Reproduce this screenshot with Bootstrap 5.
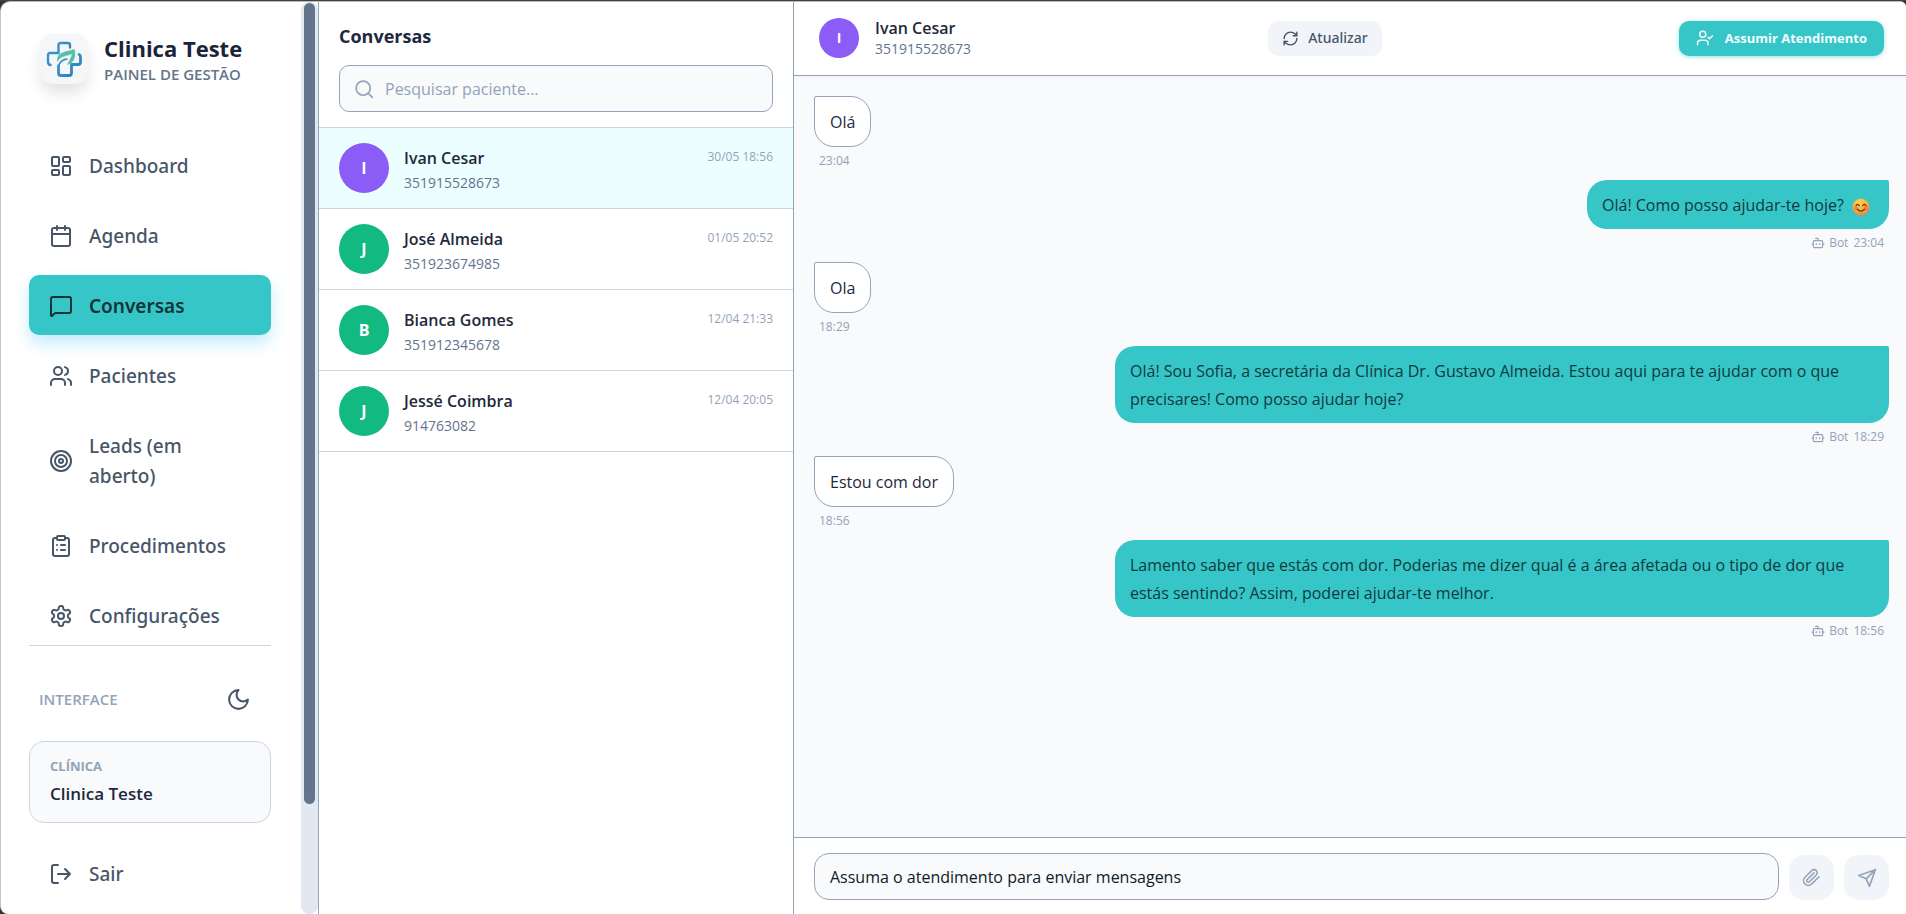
<!DOCTYPE html>
<html lang="pt">
<head>
<meta charset="utf-8">
<meta name="viewport" content="width=device-width, initial-scale=1">
<title>Clinica Teste - Conversas</title>
<link href="https://cdn.jsdelivr.net/npm/bootstrap@5.3.0/dist/css/bootstrap.min.css" rel="stylesheet">
<style>
  :root { --teal: #36c6c7; --ink: #1e293b; --slate: #475569; --soft: #64748b; --mute: #94a3b8; --hair: #cbd5e1; --mist: #f8fafc; }
  body { font-family: "Open Sans", "Noto Sans", sans-serif; font-size: 16px; line-height: 24px; color: var(--ink); background: #333; }
  svg { fill: none; stroke: currentColor; stroke-width: 2; stroke-linecap: round; stroke-linejoin: round; flex: none; }
  a { color: inherit; text-decoration: none; }
  .shell { height: 100vh; border-top: 1px solid #444046; }
  .window { background: #fff; border-left: 1px solid #c3c3c6; border-top: 1px solid #b9b9bc; border-radius: 10px 6px 0 8px; overflow: hidden; }

  .side { width: 300px; padding: 31px 30px 0 28px; flex: none; }
  .brand { padding-left: 10px; gap: 15px; margin-bottom: 50px; }
  .brand-logo { width: 50px; height: 50px; border-radius: 14px; background: #f5f6f7; box-shadow: 0 10px 16px -2px rgba(0,0,0,.12); flex: none; }
  .brand h1 { font-size: 22px; line-height: 30px; font-weight: 700; margin: 0; color: #1b2438; }
  .brand-sub { font-size: 15px; line-height: 22px; font-weight: 600; color: var(--soft); }
  .menu { gap: 10px; border-bottom: 1px solid var(--hair); }
  .menu-item { min-height: 60px; padding: 16px 20px 14px; gap: 16px; font-family: "Noto Sans", sans-serif; font-size: 19px; line-height: 30px; font-weight: 500; color: var(--slate); border-radius: 10px; }
  .menu-item.current { background: var(--teal); color: #123338; font-weight: 600; box-shadow: 0 8px 16px rgba(56,189,248,.3); }
  .iface { padding: 0 20px 0 10px; margin: 38px 0 27px; height: 30px; font-size: 15px; font-weight: 600; color: var(--mute); }
  .iface button { color: var(--slate); line-height: 0; }
  .clinic { border: 1px solid var(--hair); border-radius: 15px; background: var(--mist); padding: 14px 20px 11px; margin-bottom: 20px; }
  .clinic-label { font-size: 13px; line-height: 20px; font-weight: 700; color: var(--mute); }
  .clinic-name { font-size: 17px; line-height: 35px; font-weight: 600; }

  .track { width: 17px; padding: 1px 3px; background: #e2e8f0; border-radius: 8px; flex: none; }
  .track-thumb { height: 88%; background: #64748b; border-radius: 6px; }

  .people { width: 476px; flex: none; border: solid var(--mute); border-width: 0 1px; }
  .people-head { padding: 19px 20px 15px; border-bottom: 1px solid var(--hair); }
  .people-head h2 { font-size: 18px; line-height: 30px; font-weight: 700; margin: 0 0 14px; }
  .search-box { border: 1px solid var(--mute); border-radius: 10px; background: var(--mist); height: 47px; padding: 0 14px; gap: 11px; color: var(--mute); }
  .search-box input { border: 0; background: none; outline: 0; min-width: 0; }
  .search-box input::placeholder { color: var(--mute); opacity: 1; }
  .person { padding: 15px 20px 13px; gap: 15px; border-bottom: 1px solid var(--hair); }
  .person.current { background: #ecfeff; }
  .avatar { width: 50px; height: 50px; border-radius: 50%; background: #12b981; color: #fff; font-weight: 700; flex: none; }
  .avatar.violet { background: #8b5cf6; }
  .avatar.sm40 { width: 40px; height: 40px; font-size: 14px; }
  .who { font-weight: 600; line-height: 26px; padding-top: 2px; }
  .phone { font-size: 14px; line-height: 24px; color: var(--soft); }
  .stamp { font-size: 12px; line-height: 28px; color: var(--mute); }

  .chat-head { height: 74px; padding: 0 22px 1px 25px; border-bottom: 1px solid var(--mute); background: #fff; box-shadow: 0 1px 3px rgba(0,0,0,.05); }
  .chat-head .who { line-height: 20px; }
  .chat-head .phone { line-height: 22px; }
  .act { height: 35px; border: 0; border-radius: 10px; padding: 0 14px; font-size: 14px; line-height: 20px; background: #f1f5f9; color: var(--slate); font-family: "Noto Sans", sans-serif; font-weight: 500; gap: 9px; }
  .act.take { background: var(--teal); color: #f0fdff; font-family: inherit; font-size: 13px; font-weight: 700; gap: 11px; padding: 0 17px; box-shadow: 0 1px 4px rgba(54,198,199,.5); }
  .log { background: var(--mist); padding: 20px 17px 20px 20px; overflow: hidden; }
  .msg { max-width: 72%; padding: 11px 15px 10px; line-height: 28px; border-radius: 20px; }
  .msg.theirs { background: #fff; border: 1px solid var(--mute); border-top-left-radius: 2px; }
  .msg.ours { background: var(--teal); color: #12393f; border-top-right-radius: 2px; }
  .meta { font-size: 12px; line-height: 18px; color: var(--mute); padding: 0 5px; margin: 5px 0 10px; gap: 5px; }
  .compose { padding: 15px 17px 14px 20px; gap: 10px; border-top: 1px solid var(--mute); background: #fff; }
  .compose input { height: 47px; border: 1px solid var(--mute); border-radius: 15px; background: var(--mist); padding: 0 15px; color: #111827; min-width: 0; }
  .sq { width: 45px; height: 45px; border: 0; border-radius: 15px; background: #f1f5f9; color: var(--mute); padding: 0; }
</style>
</head>
<body>
<div class="shell">
<div class="window d-flex h-100">

  <aside class="side">
    <div class="brand d-flex align-items-center">
      <div class="brand-logo d-flex align-items-center justify-content-center">
        <svg width="36" height="36" viewBox="0 0 36 36" aria-hidden="true">
          <defs><linearGradient id="blue" x1="0" y1="0" x2="1" y2="1"><stop offset="0" stop-color="#3d9ad3"/><stop offset="1" stop-color="#2b7db8"/></linearGradient></defs>
          <path d="M11.500 12H4Q2 12 2 14V21Q2 23.500 4.500 24M12.500 12V4Q12.500 2 14.500 2H21.500Q24 2 24 4V6.500" stroke="url(#blue)" stroke-width="2.400"/>
          <path d="M33 13.500Q34.500 14 34.500 16V21Q34.500 23.500 32 23.500H25.500V32Q25.500 34.500 23 34.500H15Q12.500 34.500 12.500 32V25" stroke="url(#blue)" stroke-width="2.800"/>
          <path d="M11.500 20C10.500 11.500 18 11.500 28.500 8.500C30 17 27 22 21.500 23.500C23.500 20 25 17 26.500 12.500C20 15 15 14.500 11.500 20Z" fill="#52c0a8" stroke="#52c0a8" stroke-width=".6"/>
          <path d="M12.500 25C14 20.500 17 18.500 21 18" stroke="#3487c2" stroke-width="1.500"/>
        </svg>
      </div>
      <div>
        <h1>Clinica Teste</h1>
        <div class="brand-sub">PAINEL DE GESTÃO</div>
      </div>
    </div>

    <nav class="menu d-flex flex-column">
      <a href="#" class="menu-item d-flex align-items-center"><svg width="24" height="24" viewBox="0 0 24 24"><rect x="3" y="3" width="7" height="9" rx="1"/><rect x="14" y="3" width="7" height="5" rx="1"/><rect x="14" y="12" width="7" height="9" rx="1"/><rect x="3" y="16" width="7" height="5" rx="1"/></svg><span>Dashboard</span></a>
      <a href="#" class="menu-item d-flex align-items-center"><svg width="24" height="24" viewBox="0 0 24 24"><path d="M8 2v4M16 2v4M3 10h18"/><rect x="3" y="4" width="18" height="18" rx="2"/></svg><span>Agenda</span></a>
      <a href="#" class="menu-item current d-flex align-items-center" aria-current="page"><svg width="24" height="24" viewBox="0 0 24 24"><path d="M22 17a2 2 0 0 1-2 2H6.800a2 2 0 0 0-1.400.6L3.200 21.800A.7.7 0 0 1 2 21.300V5a2 2 0 0 1 2-2h16a2 2 0 0 1 2 2z"/></svg><span>Conversas</span></a>
      <a href="#" class="menu-item d-flex align-items-center"><svg width="24" height="24" viewBox="0 0 24 24"><path d="M16 21v-2a4 4 0 0 0-4-4H6a4 4 0 0 0-4 4v2M22 21v-2a4 4 0 0 0-3-3.870M16 3.130a4 4 0 0 1 0 7.750"/><circle cx="9" cy="7" r="4"/></svg><span>Pacientes</span></a>
      <a href="#" class="menu-item d-flex align-items-center"><svg width="24" height="24" viewBox="0 0 24 24"><circle cx="12" cy="12" r="10"/><circle cx="12" cy="12" r="6"/><circle cx="12" cy="12" r="2"/></svg><span>Leads (em aberto)</span></a>
      <a href="#" class="menu-item d-flex align-items-center"><svg width="24" height="24" viewBox="0 0 24 24"><rect x="8" y="2" width="8" height="4" rx="1"/><path d="M16 4h2a2 2 0 0 1 2 2v14a2 2 0 0 1-2 2H6a2 2 0 0 1-2-2V6a2 2 0 0 1 2-2h2M12 11h4M12 16h4M8 11h.01M8 16h.01"/></svg><span>Procedimentos</span></a>
      <a href="#" class="menu-item d-flex align-items-center"><svg width="24" height="24" viewBox="0 0 24 24"><path d="M12.220 2h-.44a2 2 0 0 0-2 2v.18a2 2 0 0 1-1 1.730l-.43.25a2 2 0 0 1-2 0l-.15-.08a2 2 0 0 0-2.730.73l-.22.38a2 2 0 0 0 .73 2.730l.15.1a2 2 0 0 1 1 1.720v.51a2 2 0 0 1-1 1.740l-.15.09a2 2 0 0 0-.73 2.730l.22.38a2 2 0 0 0 2.730.73l.15-.08a2 2 0 0 1 2 0l.43.25a2 2 0 0 1 1 1.730V20a2 2 0 0 0 2 2h.44a2 2 0 0 0 2-2v-.18a2 2 0 0 1 1-1.730l.43-.25a2 2 0 0 1 2 0l.15.08a2 2 0 0 0 2.730-.73l.22-.39a2 2 0 0 0-.73-2.730l-.15-.08a2 2 0 0 1-1-1.740v-.5a2 2 0 0 1 1-1.740l.15-.09a2 2 0 0 0 .73-2.730l-.22-.38a2 2 0 0 0-2.730-.73l-.15.08a2 2 0 0 1-2 0l-.43-.25a2 2 0 0 1-1-1.730V4a2 2 0 0 0-2-2z"/><circle cx="12" cy="12" r="3"/></svg><span>Configurações</span></a>
    </nav>

    <div class="iface d-flex align-items-center justify-content-between">
      <span>INTERFACE</span>
      <button type="button" class="btn p-0 border-0" aria-label="Tema escuro"><svg width="25" height="25" viewBox="0 0 24 24"><path d="M12 3a6 6 0 0 0 9 9 9 9 0 1 1-9-9Z"/></svg></button>
    </div>
    <div class="clinic">
      <div class="clinic-label">CLÍNICA</div>
      <div class="clinic-name">Clinica Teste</div>
    </div>
    <a href="#" class="menu-item d-flex align-items-center"><svg width="24" height="24" viewBox="0 0 24 24"><path d="M9 21H5a2 2 0 0 1-2-2V5a2 2 0 0 1 2-2h4M16 17l5-5-5-5M21 12H9"/></svg><span>Sair</span></a>
  </aside>
  <div class="track" aria-hidden="true"><div class="track-thumb"></div></div>

  <section class="people">
    <div class="people-head">
      <h2>Conversas</h2>
      <label class="search-box d-flex align-items-center">
        <svg width="20" height="20" viewBox="0 0 24 24"><circle cx="11" cy="11" r="8.500"/><path d="m22 22-4.800-4.800"/></svg>
        <input type="text" class="flex-grow-1 p-0" placeholder="Pesquisar paciente..." aria-label="Pesquisar paciente">
      </label>
    </div>
    <a href="#" class="person current d-flex">
      <span class="avatar violet d-flex align-items-center justify-content-center">I</span>
      <span class="flex-grow-1"><span class="d-flex justify-content-between"><span class="who">Ivan Cesar</span><span class="stamp">30/05 18:56</span></span><span class="phone d-block">351915528673</span></span>
    </a>
    <a href="#" class="person d-flex">
      <span class="avatar d-flex align-items-center justify-content-center">J</span>
      <span class="flex-grow-1"><span class="d-flex justify-content-between"><span class="who">José Almeida</span><span class="stamp">01/05 20:52</span></span><span class="phone d-block">351923674985</span></span>
    </a>
    <a href="#" class="person d-flex">
      <span class="avatar d-flex align-items-center justify-content-center">B</span>
      <span class="flex-grow-1"><span class="d-flex justify-content-between"><span class="who">Bianca Gomes</span><span class="stamp">12/04 21:33</span></span><span class="phone d-block">351912345678</span></span>
    </a>
    <a href="#" class="person d-flex">
      <span class="avatar d-flex align-items-center justify-content-center">J</span>
      <span class="flex-grow-1"><span class="d-flex justify-content-between"><span class="who">Jessé Coimbra</span><span class="stamp">12/04 20:05</span></span><span class="phone d-block">914763082</span></span>
    </a>
  </section>

  <main class="d-flex flex-column flex-grow-1">
    <header class="chat-head d-flex align-items-center justify-content-between position-relative">
      <div class="d-flex align-items-center gap-3">
        <span class="avatar violet sm40 d-flex align-items-center justify-content-center">I</span>
        <div><div class="who">Ivan Cesar</div><div class="phone">351915528673</div></div>
      </div>
      <button type="button" class="act d-flex align-items-center"><svg width="17" height="17" viewBox="0 0 24 24"><path d="M3 12a9 9 0 0 1 9-9 9.750 9.750 0 0 1 6.740 2.740L21 8M21 3v5h-5M21 12a9 9 0 0 1-9 9 9.750 9.750 0 0 1-6.740-2.740L3 16M8 16H3v5"/></svg>Atualizar</button>
      <button type="button" class="act take d-flex align-items-center"><svg width="18" height="18" viewBox="0 0 24 24"><path d="m16 11 2 2 4-4M16 21v-2a4 4 0 0 0-4-4H6a4 4 0 0 0-4 4v2"/><circle cx="9" cy="7" r="4"/></svg>Assumir Atendimento</button>
    </header>

    <div class="log d-flex flex-column flex-grow-1">
      <div class="msg theirs align-self-start">Olá</div>
      <div class="meta">23:04</div>

      <div class="msg ours align-self-end">Olá! Como posso ajudar-te hoje? <svg width="18" height="18" viewBox="0 0 20 20" role="img" aria-label="😊" class="align-middle mx-1"><defs><radialGradient id="face" cx=".4" cy=".25" r=".85"><stop offset="0" stop-color="#ffd54a"/><stop offset=".6" stop-color="#f9a838"/><stop offset="1" stop-color="#ee7440"/></radialGradient></defs><circle cx="10" cy="10" r="9.500" fill="url(#face)" stroke="none"/><circle cx="4.500" cy="11.500" r="2.500" fill="#f26b46" opacity=".6" stroke="none"/><circle cx="15.500" cy="11.500" r="2.500" fill="#f26b46" opacity=".6" stroke="none"/><path d="M4.500 8.500Q6.200 5.500 8 8.500M12 8.500Q13.800 5.500 15.500 8.500M6 12.500Q10 16.500 14 12.500" stroke="#5b3320" stroke-width="1.300"/></svg></div>
      <div class="meta d-flex align-items-center align-self-end"><span class="d-flex align-items-center gap-1"><svg width="14" height="14" viewBox="0 0 24 24"><path d="M12 8V4H8M2 14h2M20 14h2M15 13v2M9 13v2"/><rect x="4" y="8" width="16" height="12" rx="2"/></svg>Bot</span><span>23:04</span></div>

      <div class="msg theirs align-self-start">Ola</div>
      <div class="meta">18:29</div>

      <div class="msg ours align-self-end">Olá! Sou Sofia, a secretária da Clínica Dr. Gustavo Almeida. Estou aqui para te ajudar com o que precisares! Como posso ajudar hoje?</div>
      <div class="meta d-flex align-items-center align-self-end"><span class="d-flex align-items-center gap-1"><svg width="14" height="14" viewBox="0 0 24 24"><path d="M12 8V4H8M2 14h2M20 14h2M15 13v2M9 13v2"/><rect x="4" y="8" width="16" height="12" rx="2"/></svg>Bot</span><span>18:29</span></div>

      <div class="msg theirs align-self-start">Estou com dor</div>
      <div class="meta">18:56</div>

      <div class="msg ours align-self-end">Lamento saber que estás com dor. Poderias me dizer qual é a área afetada ou o tipo de dor que estás sentindo? Assim, poderei ajudar-te melhor.</div>
      <div class="meta d-flex align-items-center align-self-end"><span class="d-flex align-items-center gap-1"><svg width="14" height="14" viewBox="0 0 24 24"><path d="M12 8V4H8M2 14h2M20 14h2M15 13v2M9 13v2"/><rect x="4" y="8" width="16" height="12" rx="2"/></svg>Bot</span><span>18:56</span></div>
    </div>

    <form class="compose d-flex align-items-end">
      <input type="text" class="flex-grow-1" value="Assuma o atendimento para enviar mensagens" aria-label="Mensagem" readonly>
      <button type="button" class="sq d-flex align-items-center justify-content-center" aria-label="Anexar"><svg width="19" height="19" viewBox="0 0 24 24"><path d="m21.440 11.050-9.190 9.190a6 6 0 0 1-8.490-8.490l8.570-8.570A4 4 0 1 1 18 8.840l-8.590 8.570a2 2 0 0 1-2.830-2.830l8.490-8.480"/></svg></button>
      <button type="button" class="sq d-flex align-items-center justify-content-center" aria-label="Enviar"><svg width="20" height="20" viewBox="0 0 24 24"><path d="m22 2-7 20-4-9-9-4ZM22 2 11 13"/></svg></button>
    </form>
  </main>
</div>
</div>
<script src="https://cdn.jsdelivr.net/npm/bootstrap@5.3.0/dist/js/bootstrap.bundle.min.js"></script>
</body>
</html>
